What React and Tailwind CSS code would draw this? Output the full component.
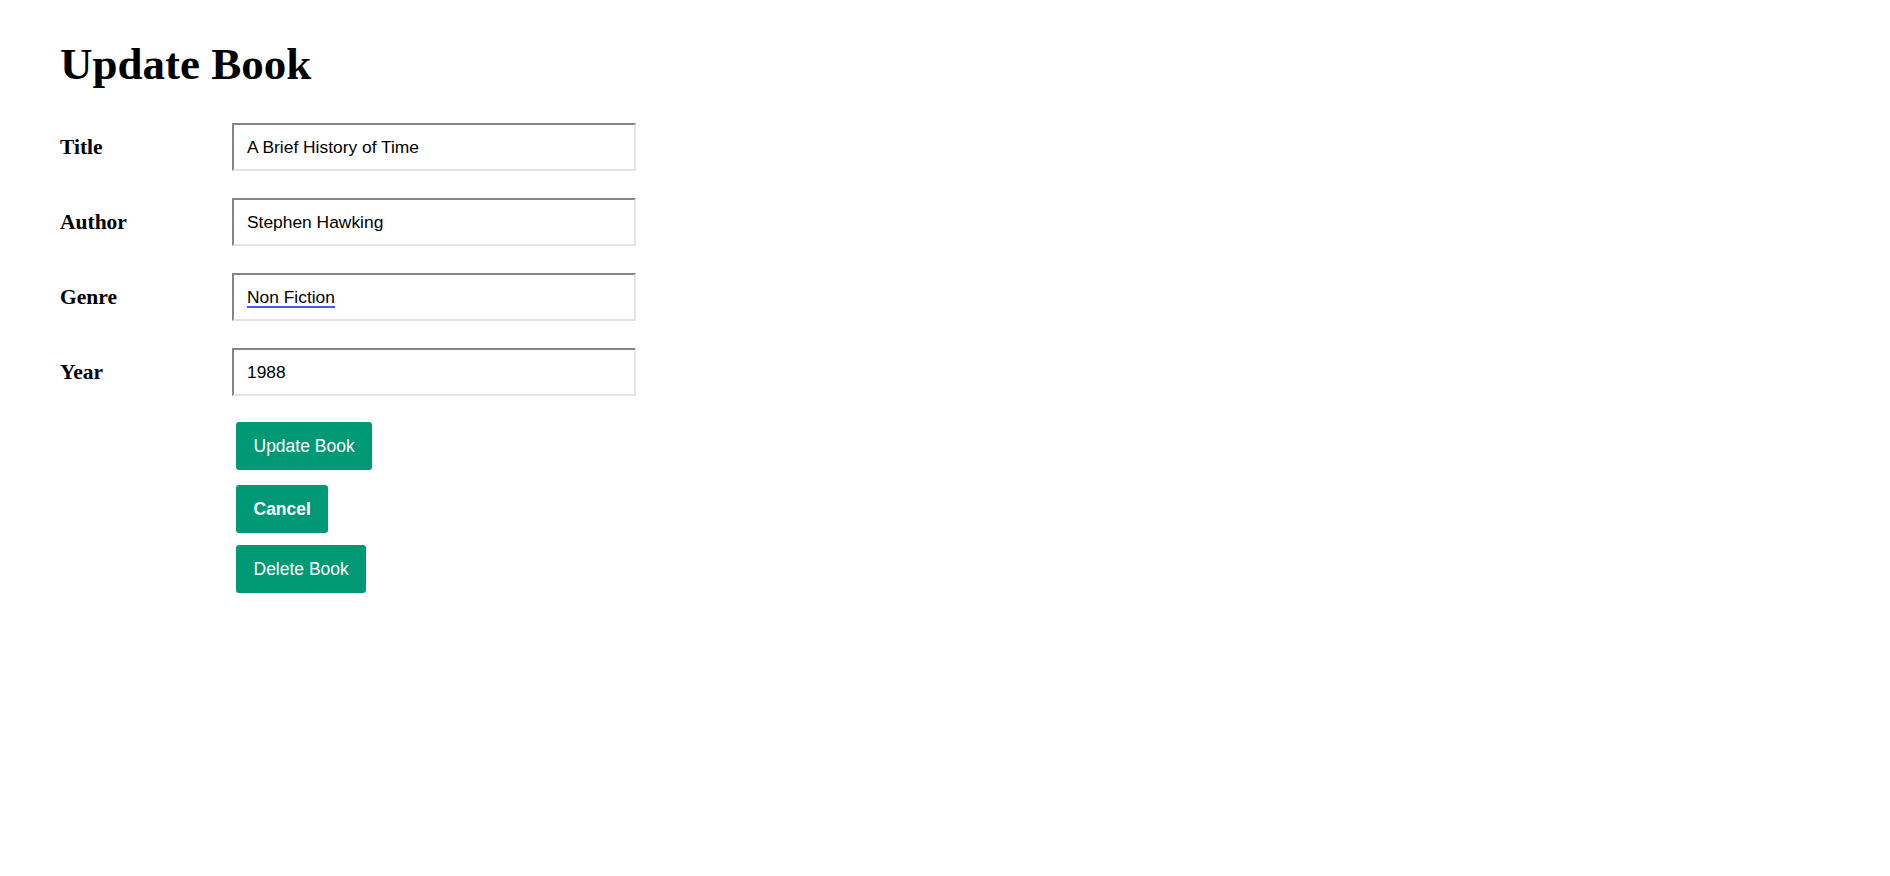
import { useState } from 'react'

const serif = { fontFamily: '"Liberation Serif", "Times New Roman", serif' }

const FIELDS = [
  { key: 'title', label: 'Title' },
  { key: 'author', label: 'Author' },
  { key: 'genre', label: 'Genre' },
  { key: 'year', label: 'Year' },
]

export default function App() {
  const [book, setBook] = useState({
    title: 'A Brief History of Time',
    author: 'Stephen Hawking',
    genre: 'Non Fiction',
    year: '1988',
  })

  const update = (key) => (e) => setBook({ ...book, [key]: e.target.value })

  return (
    <div className="min-h-screen bg-white pt-[42px] pl-[60px] text-black">
      <h1 className="text-[45px] leading-[45px] font-bold" style={serif}>Update Book</h1>

      <form className="mt-[36px] flex flex-col gap-[27px]" onSubmit={e => e.preventDefault()}>
        {FIELDS.map(f => (
          <div key={f.key} className="flex items-center h-[48px]">
            <label className="w-[172px] text-[21.5px] font-bold" style={serif}>{f.label}</label>
            <input
              value={book[f.key]}
              onChange={update(f.key)}
              spellCheck={false}
              className={`w-[404px] h-[48px] border-2 border-t-[#858585] border-l-[#858585] border-b-[#e4e4e4] border-r-[#e4e4e4] pl-[13px] text-[17.4px] text-black outline-none font-['Liberation_Sans',Arial,sans-serif] ${f.key === 'genre' ? 'underline decoration-double decoration-[#3f5fe6] decoration-[1.5px] underline-offset-[3px]' : ''}`}
            />
          </div>
        ))}
      </form>

      <div className="ml-[176px] mt-[26px] flex flex-col items-start font-['Liberation_Sans',Arial,sans-serif] text-[17.5px] text-white">
        <button className="h-[48px] px-[17.5px] rounded-[3px] bg-[#009975]">Update Book</button>
        <button className="mt-[15px] h-[48px] px-[17.5px] rounded-[3px] bg-[#009975] font-bold">Cancel</button>
        <button className="mt-[12px] h-[48px] px-[17.5px] rounded-[3px] bg-[#009975]">Delete Book</button>
      </div>
    </div>
  )
}
